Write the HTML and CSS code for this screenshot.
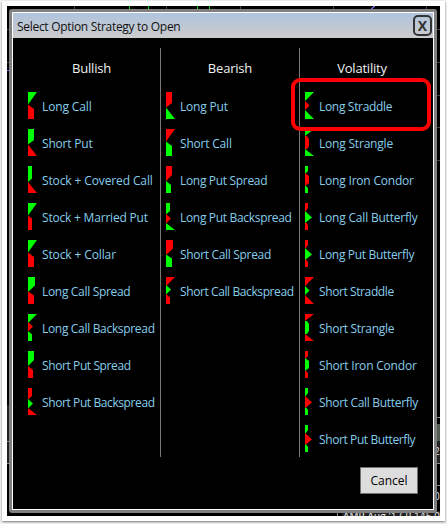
FILE: index.html
```html
<!DOCTYPE html>
<html lang="en">
<head>
    <meta charset="UTF-8">
    <title>Select Option Strategy to Open</title>
    <link rel="stylesheet" href="styles.css">
</head>
<body>
    <div class="frame">
        <!-- chart and quotes behind the dialog -->
        <svg class="backdrop" viewBox="7 6 433 510" width="433" height="510" shape-rendering="crispEdges">
            <path fill="#00e600" d="M129 6h1v3h-1zM148 6h1v3h-1zM197 6h1v3h-1zM209 6h1v3h-1z"/>
            <path fill="#444" d="M74 6h1v3h-1zM166 6h1v3h-1zM240 6h1v3h-1zM333 6h1v3h-1zM426 6h1v3h-1zM7 29h2v1H7zM7 62h2v1H7zM437 29h3v1h-3zM437 62h3v1h-3zM437 95h3v1h-3zM437 127h3v1h-3zM437 160h3v1h-3z"/>
            <path fill="#6666dd" d="M370 9l4-3h2l-4 3zM7 70h2v1H7z"/>
            <path fill="#222" d="M7 405h2v58H7zM437 440h3v23h-3zM342 511h98v5h-98z"/>
            <path fill="#555a55" d="M437 424h3v17h-3z"/>
            <path fill="#888" d="M7 441h2v1H7zM7 463h2v1H7zM437 417h3v1h-3zM437 463h3v1h-3zM437 485h3v1h-3zM337 513h1v3h-1z"/>
            <text x="343" y="520" textLength="97" class="quote">AMP Aug '17 P 145.0</text>
            <text x="434" y="455" class="quote">2</text>
            <text x="434" y="500" class="quote">0</text>
        </svg>
        <div class="dialog">
            <div class="titlebar">
                <span>Select Option Strategy to Open</span>
                <button class="close">X</button>
            </div>
            <div class="columns">
                <div class="column">
                    <h3>Bullish</h3>
                    <div class="item loose"><svg class="icon" viewBox="0 0 9 27"><path class="g" d="M0 0H9L0 12.5z"/><path class="r" d="M0 12.5L6 17V27H0z"/></svg><span>Long Call</span></div>
                    <div class="item"><svg class="icon" viewBox="0 0 9 27"><path class="g" d="M0 0H6V11L0 15.5z"/><path class="r" d="M0 15.5L9 27H0z"/></svg><span>Short Put</span></div>
                    <div class="item loose"><svg class="icon" viewBox="0 0 9 27"><path class="g" d="M0 0H4V12.5L0 16z"/><path class="r" d="M0 16L9 27H0z"/></svg><span>Stock + Covered Call</span></div>
                    <div class="item"><svg class="icon" viewBox="0 0 9 27"><path class="g" d="M0 0H9L0 12.5z"/><path class="r" d="M0 12.5L4 15.5V27H0z"/></svg><span>Stock + Married Put</span></div>
                    <div class="item loose"><svg class="icon" viewBox="0 0 9 27"><path class="g" d="M0 0H9L0 12.5z"/><path class="r" d="M0 12.5L6 17V27H0z"/></svg><span>Stock + Collar</span></div>
                    <div class="item tight"><svg class="icon" viewBox="0 0 9 27"><path class="g" d="M0 0H7V8.5L0 15z"/><path class="r" d="M0 14.5L6 18.5V27H0z"/></svg><span>Long Call Spread</span></div>
                    <div class="item tight"><svg class="icon" viewBox="0 0 9 27"><path class="g" d="M0 0H9L0 9zM0 17L4 20.5V27H0z"/><path class="r" d="M0 8L5 12.5L0 17.5z"/></svg><span>Long Call Backspread</span></div>
                    <div class="item tighter"><svg class="icon" viewBox="0 0 9 27"><path class="g" d="M0 0H6V9L0 15z"/><path class="r" d="M0 15L5 19V27H0z"/></svg><span>Short Put Spread</span></div>
                    <div class="item tighter"><svg class="icon" viewBox="0 0 9 27"><path class="r" d="M0 0H4V8L0 11.5zM0 20L9 27H0z"/><path class="g" d="M0 11L5 15.5L0 20.5z"/></svg><span>Short Put Backspread</span></div>
                </div>
                <div class="column">
                    <h3>Bearish</h3>
                    <div class="item"><svg class="icon" viewBox="0 0 9 27"><path class="r" d="M0 0H6V11L0 15.5z"/><path class="g" d="M0 15.5L9 27H0z"/></svg><span>Long Put</span></div>
                    <div class="item"><svg class="icon" viewBox="0 0 9 27"><path class="r" d="M0 0H9L0 12.5z"/><path class="g" d="M0 12.5L6 17V27H0z"/></svg><span>Short Call</span></div>
                    <div class="item tight"><svg class="icon" viewBox="0 0 9 27"><path class="r" d="M0 0H6V9L0 15z"/><path class="g" d="M0 15L5 19V27H0z"/></svg><span>Long Put Spread</span></div>
                    <div class="item tight"><svg class="icon" viewBox="0 0 9 27"><path class="g" d="M0 0H4V8L0 11.5zM0 20L9 27H0z"/><path class="r" d="M0 11L5 15.5L0 20.5z"/></svg><span>Long Put Backspread</span></div>
                    <div class="item tight"><svg class="icon" viewBox="0 0 9 27"><path class="r" d="M0 0H7V8.5L0 15z"/><path class="g" d="M0 14.5L6 18.5V27H0z"/></svg><span>Short Call Spread</span></div>
                    <div class="item tighter"><svg class="icon" viewBox="0 0 9 27"><path class="r" d="M0 0H9L0 9zM0 17L4 20.5V27H0z"/><path class="g" d="M0 8L5 12.5L0 17.5z"/></svg><span>Short Call Backspread</span></div>
                </div>
                <div class="column">
                    <h3>Volatility</h3>
                    <div class="item tight selected"><svg class="icon" viewBox="0 0 9 27"><path class="g" d="M0 0H9L0 9zM0 18L9 27H0z"/><path class="r" d="M0 9L4.5 13.5L0 18z"/></svg><span>Long Straddle</span></div>
                    <div class="item"><svg class="icon" viewBox="0 0 9 27"><path class="g" d="M0 0H9L0 7zM0 20L9 27H0z"/><path class="r" d="M0 7H2L4 10V17L2 20H0z"/></svg><span>Long Strangle</span></div>
                    <div class="item"><svg class="icon" viewBox="0 0 9 27"><path class="g" d="M0 0H3V5L0 8zM0 19L3 22V27H0z"/><path class="r" d="M0 7L4 10V17L0 20z"/></svg><span>Long Iron Condor</span></div>
                    <div class="item"><svg class="icon" viewBox="0 0 9 27"><path class="r" d="M0 0H3V5L0 9zM0 18L3 22V27H0z"/><path class="g" d="M0 8L7 14.5L0 20z"/></svg><span>Long Call Butterfly</span></div>
                    <div class="item tight"><svg class="icon" viewBox="0 0 9 27"><path class="r" d="M0 0H3V5L0 9zM0 18L3 22V27H0z"/><path class="g" d="M0 8L7 14.5L0 20z"/></svg><span>Long Put Butterfly</span></div>
                    <div class="item tighter"><svg class="icon" viewBox="0 0 9 27"><path class="r" d="M0 0H9L0 9zM0 18L9 27H0z"/><path class="g" d="M0 9L4.5 13.5L0 18z"/></svg><span>Short Straddle</span></div>
                    <div class="item tight"><svg class="icon" viewBox="0 0 9 27"><path class="r" d="M0 0H9L0 7zM0 20L9 27H0z"/><path class="g" d="M0 7H2L4 10V17L2 20H0z"/></svg><span>Short Strangle</span></div>
                    <div class="item"><svg class="icon" viewBox="0 0 9 27"><path class="r" d="M0 0H3V5L0 8zM0 19L3 22V27H0z"/><path class="g" d="M0 7L4 10V17L0 20z"/></svg><span>Short Iron Condor</span></div>
                    <div class="item tight"><svg class="icon" viewBox="0 0 9 27"><path class="g" d="M0 0H3V5L0 9zM0 18L3 22V27H0z"/><path class="r" d="M0 8L7 14.5L0 20z"/></svg><span>Short Call Butterfly</span></div>
                    <div class="item tighter"><svg class="icon" viewBox="0 0 9 27"><path class="g" d="M0 0H3V5L0 9zM0 18L3 22V27H0z"/><path class="r" d="M0 8L7 14.5L0 20z"/></svg><span>Short Put Butterfly</span></div>
                </div>
            </div>
            <div class="footer">
                <button class="cancel">Cancel</button>
            </div>
        </div>
    </div>
</body>
</html>
```
FILE: styles.css
```css
* {
    margin: 0;
    padding: 0;
    box-sizing: border-box;
}

body {
    width: 447px;
    height: 524px;
    padding: 1px 2px 3px;
    overflow: hidden;
    background-color: #f4f4f4;
    font-family: "Open Sans", "Noto Sans", sans-serif;
    font-size: 12px;
}

.frame {
    position: relative;
    width: 443px;
    height: 520px;
    padding: 8px 8px 8px 7px;
    background-color: #fff;
    box-shadow: 0 1px 2px #777;
}

.backdrop {
    position: absolute;
    left: 5px;
    top: 5px;
    background-color: #000;
}

.quote {
    font-size: 10px;
    fill: #eee;
}

.dialog {
    position: relative;
    width: 428px;
    height: 504px;
    background-color: #000;
    border: 3px solid #808080;
    border-radius: 3px;
    box-shadow: inset 0 0 0 1px #fff;
    padding: 1px;
}

.titlebar {
    display: flex;
    align-items: center;
    justify-content: space-between;
    height: 25px;
    padding: 0 1px 0 4px;
    background: linear-gradient(#b0c4de, #cbcbcb);
    color: #111;
    letter-spacing: -0.3px;
}

.titlebar span {
    padding-top: 1px;
}

.close {
    width: 19px;
    height: 21px;
    border: 2px solid #333;
    border-radius: 5px;
    background: none;
    color: #333;
    font: bold 14px/16px "Open Sans", sans-serif;
}

.columns {
    display: grid;
    grid-template-columns: 138px 139px 124px;
    height: 407px;
    margin: 10px 0 0 10px;
}

.column {
    padding-left: 5px;
    border-right: 1px solid #777;
}

.column:last-child {
    border-right: none;
}

.column h3 {
    height: 39px;
    margin-left: -5px;
    line-height: 40px;
    font-size: 13px;
    font-weight: normal;
    letter-spacing: -0.2px;
    text-align: center;
    color: #f0f0f0;
}

.item {
    position: relative;
    display: flex;
    align-items: center;
    gap: 5px;
    height: 37px;
    color: #87ceeb;
    letter-spacing: -0.2px;
    white-space: nowrap;
}

.item span {
    padding-top: 1px;
}

.loose {
    letter-spacing: -0.12px;
}

.tight {
    letter-spacing: -0.32px;
}

.tighter {
    letter-spacing: -0.4px;
}

.icon {
    width: 9px;
    height: 27px;
}

.g {
    fill: #00ff00;
}

.r {
    fill: #ff0000;
}

/* highlight ring over the picked strategy */
.selected::after {
    content: "";
    box-sizing: border-box;
    position: absolute;
    left: -14px;
    top: -9px;
    width: 140px;
    height: 53px;
    border: 4px solid #ff0000;
    border-radius: 9px;
    z-index: 1;
}

.footer {
    display: flex;
    justify-content: flex-end;
    padding: 12px 15px 0 0;
}

.cancel {
    width: 58px;
    height: 27px;
    border: 1px solid #707070;
    background-color: #ddd;
    color: #000;
    font: 12px "Open Sans", sans-serif;
}
```
